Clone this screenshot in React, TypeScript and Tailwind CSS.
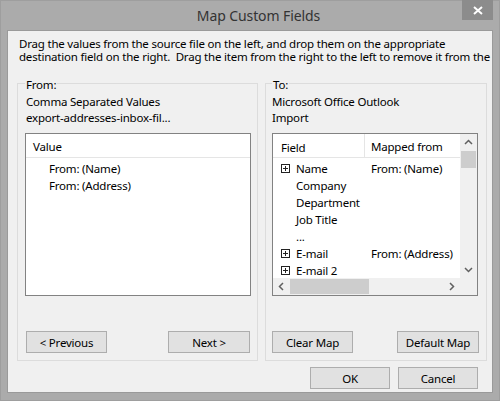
import React from "react";

const font = { fontFamily: '"Segoe UI", "Noto Sans", sans-serif' };

function Btn({ children, className = "" }: { children: React.ReactNode; className?: string }) {
  return (
    <div
      className={
        "flex h-[22px] items-center justify-center border border-[#adadad] bg-[#e1e1e1] pt-[1px] text-black " +
        className
      }
    >
      {children}
    </div>
  );
}

function Plus() {
  return (
    <span className="relative mr-[6px] inline-block h-[9px] w-[9px] shrink-0 border border-[#222] bg-white">
      <span className="absolute left-[1px] top-[3px] h-[1px] w-[5px] bg-[#222]" />
      <span className="absolute left-[3px] top-[1px] h-[5px] w-[1px] bg-[#222]" />
    </span>
  );
}

function Chevron({ d }: { d: string }) {
  return (
    <svg width="9" height="9" viewBox="0 0 9 9">
      <path d={d} stroke="#606060" strokeWidth="1.5" fill="none" />
    </svg>
  );
}

export default function App() {
  const rows: { f: string; m?: string; plus?: boolean }[] = [
    { f: "Name", m: "From: (Name)", plus: true },
    { f: "Company" },
    { f: "Department" },
    { f: "Job Title" },
    { f: "..." },
    { f: "E-mail", m: "From: (Address)", plus: true },
    { f: "E-mail 2", plus: true },
  ];
  return (
    <div
      style={font}
      className="relative h-[401px] w-[500px] overflow-hidden bg-[#ababab] shadow-[inset_0_0_0_1px_#9e9e9e]"
    >
      {/* title bar */}
      <div className="relative flex h-[30px] items-center justify-center pl-[17px] pt-[1px] text-[14px] tracking-[-0.1px] text-[#333]">
        Map Custom Fields
        <div className="absolute right-[7px] top-0 flex h-[20px] w-[31px] items-center justify-center bg-[#8c8c8c]">
          <svg width="10" height="9" viewBox="0 0 10 9">
            <path d="M1 1 L9 8 M9 1 L1 8" stroke="white" strokeWidth="2" />
          </svg>
        </div>
      </div>
      {/* client */}
      <div className="mx-[7px] h-[363px] border border-[#9a9a9a] bg-[#f0f0f0] text-[11.5px] tracking-[-0.2px] text-black">
        <div className="h-[33px] overflow-hidden whitespace-nowrap pl-[11px] pt-[6px] leading-[13px]">
          <div>Drag the values from the source file on the left, and drop them on the appropriate</div>
          <div>destination field on the right.&nbsp; Drag the item from the right to the left to remove it from the</div>
        </div>
        <div className="ml-[9px] mt-[19px] flex gap-[7px]">
          {/* From */}
          <div className="relative h-[278px] w-[241px] border border-[#dcdcdc]">
            <div className="absolute left-[7px] top-[-8px] bg-[#f0f0f0] px-[1px] pt-[1px] leading-[16px]">From:</div>
            <div className="h-[49px] pl-[8px] pt-[10px] leading-[16px]">
              <div>Comma Separated Values</div>
              <div>export-addresses-inbox-fil...</div>
            </div>
            <div className="ml-[7px] h-[163px] w-[226px] border border-[#828282] bg-white">
              <div className="flex h-[24px] items-center border-b border-[#e5e5e5] pl-[7px] pt-[3px]">Value</div>
              <div className="pl-[23px] pt-[2px] leading-[17px]">
                <div>From: (Name)</div>
                <div>From: (Address)</div>
              </div>
            </div>
            <div className="ml-[8px] mr-[7px] mt-[35px] flex justify-between">
              <Btn className="w-[81px]">&lt; Previous</Btn>
              <Btn className="w-[82px]">Next &gt;</Btn>
            </div>
          </div>
          {/* To */}
          <div className="relative h-[278px] w-[222px] border border-[#dcdcdc]">
            <div className="absolute left-[6px] top-[-8px] bg-[#f0f0f0] px-[1px] pt-[1px] leading-[16px]">To:</div>
            <div className="h-[49px] pl-[6px] pt-[10px] leading-[16px]">
              <div>Microsoft Office Outlook</div>
              <div>Import</div>
            </div>
            <div className="ml-[6px] flex h-[163px] w-[206px] flex-col border border-[#828282] bg-white">
              <div className="flex min-h-0 flex-1">
                <div className="flex-1 overflow-hidden">
                  <div className="flex h-[24px] items-center border-b border-[#e5e5e5]">
                    <div className="w-[92px] border-r border-[#e5e5e5] pl-[8px] pt-[3px] leading-[21px]">Field</div>
                    <div className="whitespace-nowrap pl-[6px] pt-[3px]">Mapped from</div>
                  </div>
                  <div className="pt-[2px] leading-[17px]">
                    {rows.map((r) => (
                      <div key={r.f} className="flex items-center">
                        <div className="flex w-[93px] items-center pl-[8px]">
                          {r.plus ? <Plus /> : <span className="inline-block w-[15px] shrink-0" />}
                          {r.f}
                        </div>
                        <div className="whitespace-nowrap pl-[5px]">{r.m ?? ""}</div>
                      </div>
                    ))}
                  </div>
                </div>
                {/* vertical scrollbar */}
                <div className="flex w-[17px] flex-col bg-[#f0f0f0]">
                  <div className="flex h-[17px] items-center justify-center">
                    <Chevron d="M1 6 L4.5 2.5 L8 6" />
                  </div>
                  <div className="mx-[1px] h-[17px] bg-[#cdcdcd]" />
                  <div className="flex-1" />
                  <div className="flex h-[17px] items-center justify-center">
                    <Chevron d="M1 3 L4.5 6.5 L8 3" />
                  </div>
                </div>
              </div>
              {/* horizontal scrollbar */}
              <div className="flex h-[17px] bg-[#f0f0f0]">
                <div className="flex w-[17px] items-center justify-center">
                  <Chevron d="M6 1 L2.5 4.5 L6 8" />
                </div>
                <div className="my-[1px] w-[79px] bg-[#cdcdcd]" />
                <div className="flex-1" />
                <div className="flex w-[17px] items-center justify-center">
                  <Chevron d="M3 1 L6.5 4.5 L3 8" />
                </div>
                <div className="w-[17px]" />
              </div>
            </div>
            <div className="ml-[6px] mr-[7px] mt-[35px] flex justify-between">
              <Btn className="w-[81px]">Clear Map</Btn>
              <Btn className="w-[82px]">Default Map</Btn>
            </div>
          </div>
        </div>
        <div className="mr-[14px] mt-[6px] flex justify-end gap-[8px]">
          <Btn className="w-[80px]">OK</Btn>
          <Btn className="w-[80px]">Cancel</Btn>
        </div>
      </div>
    </div>
  );
}
